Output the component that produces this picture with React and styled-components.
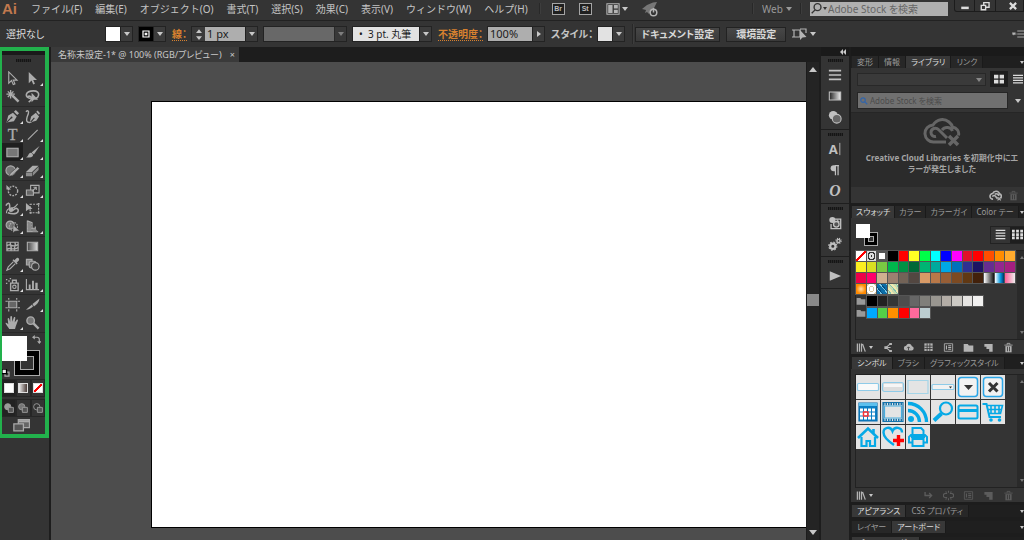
import { useState } from 'react';

import styled, { createGlobalStyle, css, ThemeProvider } from 'styled-components';

const theme = {
    panel: '#343434',
    dark: '#1d1d1d',
    text: '#c4c4c4',
    accent: '#d8812f',
    icon: '#b4b4b4',
};

const GlobalStyle = createGlobalStyle`
    * {
        box-sizing: border-box;
    }

    body {
        margin: 0;
        overflow: hidden;
        background: #343434;
        font-family: 'Noto Sans', 'Noto Sans CJK JP', sans-serif;
        font-size: 10px;
        font-feature-settings: 'palt';
    }

    button, input, select {
        font: inherit;
        font-feature-settings: inherit;
        color: inherit;
        margin: 0;
        padding: 0;
        border: 0;
        border-radius: 0;
        background: none;
    }
`;

/* ---------- icons ---------- */

const StyledSvg = styled.svg`
    display: block;
    flex: none;
    fill: none;
    stroke: currentColor;
    stroke-width: ${ ( { $weight } ) => $weight || 1.2 };
`;

function Icon( { size = 16, weight, children } ) {
    return (
        <StyledSvg width={ size } height={ size } viewBox="0 0 16 16" $weight={ weight } aria-hidden="true">
            { children }
        </StyledSvg>
    );
}

const solid = { fill: 'currentColor', stroke: 'none' };

const arrow = 'M4 1v12l3-2.800 1.800 4.300 1.800-.8-1.800-4h4z';

const tools = {
    選択: <path d={ arrow } />,
    ダイレクト選択: <path d={ arrow } { ...solid } />,
    自動選択: <>
        <path d="M8 7l6.500 6.500" strokeWidth="2.600" />
        <path d="M6 1v9M1.500 5.500h9M3 2.500l6 6M9 2.500l-6 6" strokeWidth="1.400" />
    </>,
    なげなわ: <>
        <path d="M6 10C2.500 9.500 1 8 1.500 5.500 2.500 2.500 6 2 9 2c4 0 6 2 5.500 4.500-.3 2-1.500 3-3 3.500M3 8c2-1 4 0 4 2s-2 3-3 4" strokeWidth="1.700" />
        <path d="M7 4v10l2.600-2.500H14z" { ...solid } />
    </>,
    ペン: <>
        <path d="M1.500 14.500L3.500 7l5-3 4 4-3 5z" { ...solid } />
        <path d="M9.500 3l2-2 3.500 3.500-2 2z" { ...solid } />
        <path d="M2 14l4.500-4.500" stroke="#343434" />
        <circle cx="7" cy="9" r="1" fill="#343434" stroke="none" />
    </>,
    曲線: <>
        <path d="M5 14.500L6.500 8l5-4L15 8l-3 4.500z" { ...solid } />
        <path d="M12 3l1.500-1.500L16 4.500 14.800 6z" { ...solid } />
        <path d="M1 3c2-2 3.500-1 2.500 2S1 11 2 13s5 1 5 1" strokeWidth="1.500" />
        <path d="M6 14l4-4.500" stroke="#343434" />
    </>,
    文字: <text x="8" y="14" textAnchor="middle" fontSize="17" fontFamily="Liberation Serif, serif" fill="currentColor" strokeWidth=".3">T</text>,
    直線: <path d="M3 13.500L13.500 3" />,
    長方形: <rect x="2" y="3.500" width="12" height="9" fill="#777" />,
    ブラシ: <>
        <path d="M15.500 1L9.500 10 7 8z" { ...solid } />
        <path d="M1 13c2 0 2-2.500 3.500-4S8 9 8.500 10.500 7 14.500 1 13z" { ...solid } />
    </>,
    Shaper: <>
        <circle cx="6" cy="8" r="5" fill="#777" />
        <path d="M4 14.500l1.500-3.500 8-7 2 2-7.500 7z" { ...solid } stroke="#343434" strokeWidth=".6" />
    </>,
    消しゴム: <>
        <path d="M1 9.500L8 3h6.500L7.500 9.500z" { ...solid } />
        <path d="M1 10.200h6.500V14H1zM8.200 10l6.300-6v3.500L8.200 13.800z" fill="#8c8c8c" stroke="none" />
    </>,
    回転: <>
        <circle cx="8.500" cy="8.500" r="5" strokeDasharray="2 1.200" strokeWidth="1.500" />
        <path d="M1.500 2v5h5z" { ...solid } />
    </>,
    拡大縮小: <>
        <path d="M6 2.500h9v8H6z" />
        <path d="M1.500 7.500H9V13H1.500z" fill="#666" />
        <path d="M7.500 9l4-4M9 4.500h3v3" />
    </>,
    線幅: <>
        <path d="M1 5c2-4 4-3 4 0s-1 6 1.500 6S10 7 12.500 8s2 4-.5 5-6 .5-9-.500" strokeWidth="1.700" />
        <path d="M1.500 13c0-3 2-5 5-5.500s3 1 7-4.500" />
        <circle cx="7" cy="9" r="2" { ...solid } />
    </>,
    自由変形: <>
        <path d="M5.500 3.500h9v9h-9z" strokeDasharray="2 1.200" />
        <path d="M13.500 2h2v2h-2zM13.500 11.500h2v2h-2zM5 11.500h2v2H5z" { ...solid } />
        <path d="M1 2v9l2.500-2 4.500-.800z" { ...solid } />
    </>,
    シェイプ形成: <>
        <circle cx="5.500" cy="6.500" r="4.300" fill="#777" />
        <circle cx="9" cy="8" r="4.300" strokeDasharray="1.600 1" />
        <path d="M8.500 6v9l2-2 5-.500z" { ...solid } stroke="#343434" strokeWidth=".5" />
    </>,
    遠近グリッド: <>
        <path d="M2.500 1.500v12H14M2.500 2l5 2v9.500M2.500 6l5 1M2.500 10H11M5 3v10.500M11 8v5.500" />
        <path d="M3 3l4 1.500V13H3zM8 10h3l3 3.500H8z" fill="#888" stroke="none" />
    </>,
    メッシュ: <>
        <path d="M2 3.500h12v9H2z" />
        <path d="M2 7c4-3 5 3 12-1M2 11c4-3 7 2 12-2M6 3.500c-2 4 3 5 0 9M10.500 3.500c2 3-2 6 0 9" strokeWidth="1.500" />
    </>,
    グラデーション: <>
        <defs>
            <linearGradient id="tool-gradient">
                <stop stopColor="#444" />
                <stop offset="1" stopColor="#ddd" />
            </linearGradient>
        </defs>
        <path d="M2.500 3.500h11v9h-11z" fill="url(#tool-gradient)" />
    </>,
    スポイト: <>
        <path d="M9 5L3.500 10.500 2 14l3.500-1.500L11 7" />
        <path d="M8 3.500L12.500 8l1-1-1-1L15 3.500c.5-2-1-3-2.500-2.500L10 3.500l-1-1z" { ...solid } />
    </>,
    ブレンド: <>
        <path d="M1.500 2.500h6v6h-6z" fill="#888" />
        <rect x="4.500" y="4.500" width="7" height="7" rx="2" fill="#666" />
        <circle cx="11" cy="10" r="4" fill="#3d3d3d" />
    </>,
    シンボルスプレー: <>
        <path d="M6 6.500h8v8H6zM8 6V3.500h4V6" strokeWidth="1.500" />
        <circle cx="10" cy="10.500" r="1.800" />
        <path d="M1 2h1.500v1.500H1zM3.500 3.500H5V5H3.500zM1 6h1.500v1.500H1zM5 1h1.500v1.500H5z" { ...solid } />
    </>,
    棒グラフ: <>
        <path d="M1.500 2v11.500H15" />
        <path d="M4 8h2v5H4zM7.500 4h2v9h-2zM11 6h2.500v7H11z" { ...solid } />
    </>,
    アートボード: <>
        <path d="M4 4.500h8.500v7H4z" fill="#666" />
        <path d="M4 1v2M12.500 1v2M4 13v2.500M12.500 13v2.500M.5 4.500H3M.5 11.500H3M13.500 4.500H16M13.500 11.500H16" />
    </>,
    スライス: <>
        <path d="M15.500 1.500L8 7.500l1.500 2.500c3-1.500 5.500-5 6-8.500z" { ...solid } />
        <path d="M7.500 8L1 13.500c3 0 5.500-1.500 7.500-3.500z" { ...solid } />
    </>,
    手のひら: <path d="M4.500 15C3 12 1 10.500.500 8.500c1-1 2 .5 3 1.300L2.800 4c.6-1.300 1.500-.8 1.800.2L5.500 7.500l.2-5.800c.6-1 1.600-.8 1.800.2l.3 5.400L9.500 2.400c.8-.8 1.600-.2 1.500.8L10.300 8l2.200-3c.9-.6 1.600.2 1.200 1.200L11.500 12l-.8 3z" { ...solid } />,
    ズーム: <>
        <circle cx="6" cy="6" r="4" fill="#777" strokeWidth="1.500" />
        <path d="M9 9l5.500 5.500" strokeWidth="2.500" />
    </>,
};

// name, has flyout
const toolGroups = [
    [ [ '選択' ], [ 'ダイレクト選択', true ], [ '自動選択' ], [ 'なげなわ' ] ],
    [
        [ 'ペン', true ], [ '曲線' ], [ '文字', true ], [ '直線', true ],
        [ '長方形', true ], [ 'ブラシ', true ], [ 'Shaper', true ], [ '消しゴム', true ],
    ],
    [
        [ '回転', true ], [ '拡大縮小', true ], [ '線幅', true ], [ '自由変形' ],
        [ 'シェイプ形成', true ], [ '遠近グリッド', true ],
    ],
    [ [ 'メッシュ' ], [ 'グラデーション' ], [ 'スポイト', true ], [ 'ブレンド' ] ],
    [ [ 'シンボルスプレー', true ], [ '棒グラフ', true ] ],
    [ [ 'アートボード' ], [ 'スライス', true ], [ '手のひら', true ], [ 'ズーム' ] ],
];

const cloud = 'M5 12.500a3.500 3.500 0 0 1-.5-7A4.500 4.500 0 0 1 13 6a3.300 3.300 0 0 1-.5 6.500z';

const glyphs = {
    library: <path d="M2 2v12M5 2v12M8 2v12M9.500 3l4 11" strokeWidth="1.800" />,
    share: <>
        <path d="M10 3L4.500 8l5.500 5M4.500 8H11" strokeWidth="1.600" />
        <path d="M9 1.500h4v3H9zM2 6h4v4H2zM9 11.500h4v3H9z" { ...solid } />
    </>,
    cloud: <>
        <path d={ cloud } { ...solid } />
        <path d="M8 12V7.500M6 9l2-2 2 2" stroke="#343434" />
    </>,
    kinds: <>
        <path d="M2 2h12v11H2z" { ...solid } />
        <path d="M6 2v11M10 2v11M2 6h12M2 9.500h12" stroke="#343434" />
    </>,
    options: <>
        <path d="M2 2.500h12v11H2z" />
        <path d="M5 5v6M7.500 5.500H12M7.500 8H12M7.500 10.500H12" strokeWidth="1.600" />
    </>,
    folder: <path d="M1 3h6l1.500 2H15v9H1z" { ...solid } />,
    page: <path d="M2 3h12v11H9v-4H5V7H2z" { ...solid } />,
    trash: <>
        <path d="M3.500 6h9v9h-9z" { ...solid } />
        <path d="M2 4.500h12M6 4V2h4v2" />
        <path d="M6.500 7v6.500M9.500 7v6.500" stroke="#343434" />
    </>,
    place: <path d="M3 3v5h9M9 4.500L12.500 8 9 11.500" strokeWidth="2" />,
    unlink: <path d="M6 5H3.500a3 3 0 0 0 0 6H6M10 5h2.500a3 3 0 0 1 0 6H10M8 1v3M8 12v3M4 2l1 2M12 2l-1 2M4 14l1-2M12 14l-1-2" strokeWidth="1.600" />,
    creative: <>
        <path d="M5 12.500a3.500 3.500 0 0 1-.5-7A4.500 4.500 0 0 1 13 6c3 1 2.500 4 1 5.500M4.500 9.500c0-2 3-2 4 0l2 2.500M7 6.500c2-1.500 5 0 5 2" strokeWidth="2" />
        <path d="M10.500 10l4 4M14.500 10l-4 4" strokeWidth="1.500" />
    </>,
};

const Triangle = styled.span`
    display: inline-block;
    flex: none;
    width: 0;
    height: 0;
    color: ${ ( { $color } ) => $color || '#c8c8c8' };
    border: 3px solid transparent;

    ${ ( { $to } ) => ( {
        up: css`border-width: 0 4px 5px; border-bottom-color: currentColor;`,
        down: css`border-width: 4px 3px 0; border-top-color: currentColor;`,
        wide: css`border-width: 5px 4px 0; border-top-color: currentColor;`,
        right: css`border-width: 3px 0 3px 4px; border-left-color: currentColor;`,
        left: css`border-width: 3px 3px 3px 0; border-right-color: currentColor;`,
        smallUp: css`border-width: 0 2px 3px; border-bottom-color: currentColor;`,
        smallDown: css`border-width: 3px 2px 0; border-top-color: currentColor;`,
    } )[ $to || 'down' ] }
`;

/* ---------- frame ---------- */

const Window = styled.div`
    display: flex;
    flex-direction: column;
    height: 100vh;
    overflow: hidden;
    line-height: 14px;
    white-space: nowrap;
    color: ${ ( { theme } ) => theme.text };
    background: ${ ( { theme } ) => theme.panel };
`;

const MenuBar = styled.header`
    display: flex;
    align-items: center;
    height: 21px;
    flex: none;
    padding-bottom: 3px;
    border-bottom: 1px solid #222;
`;

const Brand = styled.span`
    width: 31px;
    padding-left: 2px;
    color: #c1794e;
    font: bold 15px/17px 'Liberation Sans', sans-serif;
`;

const MenuList = styled.nav`
    display: flex;
    gap: 13px;
    font-feature-settings: normal;
`;

const Rule = styled.span`
    align-self: stretch;
    width: 2px;
    margin: 3px ${ ( { $gap } ) => $gap }px;
    background: #282828;
    border-right: 1px solid #3d3d3d;
`;

const ActionRow = styled.div`
    display: flex;
    align-items: center;
    gap: 14px;
`;

const AppBadge = styled.button`
    width: 13px;
    height: 12px;
    border: 1px solid #a5a5a5;
    background: #1f1f1f;
    color: #bbb;
    font: bold 7px/8px 'Liberation Sans', sans-serif;
`;

const IconButton = styled.button`
    display: flex;
    align-items: center;
    gap: 2px;
    color: ${ ( { $dim, theme } ) => $dim ? '#5c5c5c' : theme.icon };
`;

const MenuTools = styled.div`
    display: flex;
    align-items: center;
    align-self: stretch;
    margin-left: auto;
`;

const Workspace = styled.select`
    appearance: none;
    width: 24px;
    color: #999;
`;

const StockSearch = styled.label`
    display: flex;
    align-items: center;
    gap: 1px;
    width: 138px;
    height: 14px;
    padding-left: 1px;
    background: #b0b0b0;
    color: #333;

    input {
        flex: 1;
        min-width: 0;
        outline: 0;
    }

    input::placeholder {
        color: #666;
    }
`;

const WindowButtons = styled.div`
    display: flex;
    align-self: flex-start;
    height: 12px;
    margin-left: 6px;

    button {
        display: grid;
        place-items: center;
        width: 21px;
        color: #ddd;
        border: 1px solid #1c1c1c;
        border-top: 0;
        border-left: 0;
    }

    button:first-child {
        border-left: 1px solid #1c1c1c;
        border-bottom-left-radius: 3px;
    }

    button:last-child {
        width: 28px;
        padding-left: 6px;
    }
`;

const ControlBar = styled.div`
    display: flex;
    align-items: center;
    height: 26px;
    flex: none;
    padding-left: 6px;
`;

const SelectionState = styled.span`
    width: 100px;
    color: #ddd;
`;

const Field = styled.div`
    display: flex;
    height: 14px;
    margin-right: 7px;
    outline: 1px solid #232323;
`;

const CaretButton = styled.button`
    display: grid;
    place-items: center;
    width: 12px;
    background: #3c3c3c;
    border-left: 1px solid #222;
    opacity: ${ ( { disabled } ) => disabled ? .5 : 1 };
`;

const PaintButton = styled.button`
    display: grid;
    place-items: center;
    width: 14px;
    background: ${ ( { $fill } ) => $fill };
    color: #fff;
`;

const FieldLabel = styled.label`
    margin-right: 5px;
    font-weight: bold;
    line-height: 12px;
    color: ${ ( { $link, theme } ) => $link ? theme.accent : '#c4c4c4' };
    ${ ( { $link } ) => $link && css`border-bottom: 1px dotted #d8812f;` }
`;

const Stepper = styled.div`
    display: flex;
    flex-direction: column;
    width: 13px;
    background: #3a3a3a;

    button {
        display: grid;
        place-items: center;
        height: 7px;
    }
`;

const ValueInput = styled.input`
    width: ${ ( { $wide } ) => $wide ? 44 : 40 }px;
    padding-left: 2px;
    background: #aeaeae;
    color: #1c1c1c;
    font-size: 11px;
`;

const ValueSelect = styled.select`
    appearance: none;
    width: ${ ( { $wide } ) => $wide ? 70 : 66 }px;
    padding-left: 6px;
    background: ${ ( { disabled } ) => disabled ? '#686868' : '#e2e2e2' };
    color: #1c1c1c;
    opacity: 1;
    font-size: 10px;
`;

const BarButton = styled.button`
    height: 15px;
    min-width: 60px;
    margin-right: 6px;
    padding: 0 5px;
    border: 1px solid #222;
    background: linear-gradient( #474747, #3a3a3a );
    color: #d8d8d8;
    font-weight: bold;
    line-height: 13px;
`;

const Body = styled.div`
    display: flex;
    flex: 1;
    min-height: 0;
    background: ${ ( { theme } ) => theme.dark };
`;

/* ---------- tool box ---------- */

const ToolColumn = styled.aside`
    width: 49px;
    flex: none;
    margin-right: 2px;
    background: ${ ( { theme } ) => theme.panel };
`;

const ToolBox = styled.div`
    border: 4px solid #22b14c;
    border-left-width: 2px;
`;

const Grip = styled.div`
    height: ${ ( { $tall } ) => $tall ? 14 : 8 }px;
    padding-bottom: ${ ( { $tall } ) => $tall ? 4 : 0 }px;
    display: grid;
    place-items: center;

    &::before {
        content: '';
        width: 15px;
        height: 3px;
        background: repeating-linear-gradient( 90deg, #151515 0 1px, #262626 1px 2px );
    }
`;

const DarkStrip = styled.div`
    height: 4px;
    background: #1a1a1a;
`;

const ToolGroup = styled.div`
    display: grid;
    grid-template-columns: 1fr 1fr;
    border-bottom: 1px solid #292929;
    padding: 0 2px 1px 0;
`;

const ToolButton = styled.button`
    position: relative;
    display: grid;
    place-items: center;
    height: 18px;
    color: #acacac;
    background: ${ ( { $active } ) => $active ? '#1f1f1f' : 'none' };

    ${ ( { $flyout } ) => $flyout && css`
        &::after {
            content: '';
            position: absolute;
            right: 0;
            bottom: 1px;
            border-left: 3px solid transparent;
            border-bottom: 3px solid #ddd;
        }
    ` }
`;

const PaintStack = styled.div`
    position: relative;
    height: ${ ( { $small } ) => $small ? 22 : 46 }px;
    width: ${ ( { $small } ) => $small ? 24 : 43 }px;
    color: #aaa;
`;

const FillChip = styled.button`
    position: absolute;
    top: ${ ( { $small } ) => $small ? 0 : 3 }px;
    left: 0;
    width: ${ ( { $small } ) => $small ? 14 : 25 }px;
    aspect-ratio: 1 / 1;
    background: #fff;
`;

const StrokeChip = styled.button`
    position: absolute;
    right: ${ ( { $small } ) => $small ? 2 : 5 }px;
    bottom: ${ ( { $small } ) => $small ? 0 : 3 }px;
    width: ${ ( { $small } ) => $small ? 14 : 26 }px;
    aspect-ratio: 1 / 1;
    background: #000;
    border: 1px solid #aaa;

    &::after {
        content: '';
        position: absolute;
        inset: ${ ( { $small } ) => $small ? 3 : 5 }px;
        background: #343434;
        border: 1px solid #aaa;
    }
`;

const SwapButton = styled.button`
    position: absolute;
    top: 2px;
    right: 4px;
`;

const ResetButton = styled.button`
    position: absolute;
    bottom: 2px;
    left: 0;
`;

const ModeRow = styled.div`
    display: grid;
    grid-template-columns: repeat( 3, 1fr );
    height: 18px;
    margin-bottom: ${ ( { $gap } ) => $gap || 0 }px;

    button {
        display: grid;
        place-items: center;
        border: 1px solid #262626;
        color: #999;
    }

    button:first-child {
        background: #222;
    }
`;

const ModeChip = styled.span`
    width: 10px;
    height: 10px;
    border: 1px solid #ddd;
    background: ${ ( { $fill } ) => $fill };
`;

const ScreenMode = styled.button`
    display: flex;
    justify-content: center;
    align-items: center;
    width: 38px;
    height: 17px;
    color: #aaa;
`;

/* ---------- document ---------- */

const DocumentArea = styled.main`
    display: flex;
    flex-direction: column;
    flex: 1;
    min-width: 0;
`;

const DocumentTabs = styled.div`
    display: flex;
    height: 15px;
    flex: none;
`;

const DocumentTab = styled.div`
    display: flex;
    align-items: center;
    gap: 8px;
    padding: 0 4px 0 7px;
    background: #3a3a3a;
    color: #c8c8c8;
    font-size: 9px;
`;

const Stage = styled.div`
    display: flex;
    flex: 1;
    min-height: 0;
    background: #4d4d4d;
`;

const Board = styled.div`
    flex: 1;
    margin: 39px 0 12px 100px;
    background: #fff;
    border: 1px solid #000;
    border-right: 0;
`;

const ScrollBar = styled.div`
    display: flex;
    flex-direction: column;
    align-items: center;
    width: 13px;
    padding: 5px 0;
    background: #242424;
    border-left: 1px solid #1c1c1c;

    i {
        width: 12px;
        height: 12px;
        margin: 222px 0 auto;
        background: #888;
    }
`;

/* ---------- docks ---------- */

const Dock = styled.aside`
    display: flex;
    flex-direction: column;
    width: ${ ( { $wide } ) => $wide ? 173 : 28 }px;
    flex: none;
    margin-left: 2px;
    background: ${ ( { $wide, theme } ) => $wide ? theme.dark : theme.panel };
`;

const DockHeader = styled.div`
    display: flex;
    justify-content: flex-end;
    align-items: center;
    height: 9px;
    flex: none;
    padding-right: 3px;
    background: #1a1a1a;
`;

const DockGroup = styled.div`
    padding-bottom: 2px;
    border-bottom: 1px solid #1e1e1e;
`;

const DockButton = styled.button`
    display: grid;
    place-items: center;
    width: 100%;
    height: 21px;
    color: #c0c0c0;
`;

const Panel = styled.section`
    display: flex;
    flex-direction: column;
    margin-bottom: ${ ( { $gap } ) => $gap || 3 }px;
    flex: none;
    background: ${ ( { theme } ) => theme.panel };
`;

const TabStrip = styled.div`
    display: flex;
    align-items: stretch;
    height: 12px;
    background: #1f1f1f;
    padding-left: 1px;
`;

const Tab = styled.button`
    padding: 0 ${ ( { $tight } ) => $tight ? 4 : 5 }px;
    border-right: 1px solid #1a1a1a;
    line-height: 12px;
    font-size: 8px;
    background: ${ ( { $active } ) => $active ? '#383838' : '#272727' };
    color: ${ ( { $active } ) => $active ? '#dcdcdc' : '#9a9a9a' };
`;

const StripMenu = styled.span`
    display: flex;
    align-items: center;
    margin-left: auto;
`;

const LibraryTop = styled.div`
    display: grid;
    grid-template-columns: 1fr 18px 12px;
    gap: 5px 4px;
    align-items: center;
    height: 45px;
    padding: 3px 0 4px 6px;
    border-bottom: 1px solid #262626;
`;

const SelectWrap = styled.div`
    position: relative;

    select {
        appearance: none;
        display: block;
        width: 100%;
        height: 13px;
        border: 1px solid #282828;
        background: #3a3a3a;
    }

    span {
        position: absolute;
        top: 5px;
        right: 4px;
        pointer-events: none;
    }
`;

const ViewButton = styled.button`
    display: grid;
    place-items: center;
    height: 16px;
    color: #ddd;
    background: ${ ( { $active } ) => $active ? '#1e1e1e' : 'none' };
`;

const LibrarySearch = styled.label`
    grid-column: 1 / 3;
    display: flex;
    align-items: center;
    gap: 2px;
    height: 17px;
    padding-left: 2px;
    border: 1px solid #262626;
    background: #707070;
    color: #3465a8;

    input {
        flex: 1;
        min-width: 0;
        font-size: 8px;
    }

    input::placeholder {
        color: #4c4c4c;
    }
`;

const LibraryMessage = styled.div`
    display: flex;
    flex-direction: column;
    align-items: center;
    height: 74px;
    padding: 5px 0 0 9px;
    background: #2b2b2b;
    color: #a4a4a4;
    text-align: center;
    font-size: 8px;
    font-weight: bold;
    line-height: 11px;

    svg {
        color: #666;
        margin-bottom: 4px;
    }

    p {
        margin: 0;
    }
`;

const PanelFooter = styled.div`
    display: flex;
    align-items: center;
    justify-content: space-between;
    height: ${ ( { $tall } ) => $tall ? 16 : 14 }px;
    padding: 0 ${ ( { $tall } ) => $tall ? 5 : 10 }px 0 5px;
`;

const FooterGroup = styled.div`
    display: flex;
    gap: ${ ( { $close } ) => $close ? 6 : 9 }px;
    margin-left: auto;
`;

const PaintRow = styled.div`
    display: flex;
    align-items: center;
    justify-content: space-between;
    height: 32px;
    padding: 1px 0 0 5px;
`;

const ViewToggle = styled.div`
    display: grid;
    grid-template-columns: 19px 14px;
    border: 1px solid #222;
    border-right: 0;
`;

const Scrolled = styled.div`
    display: flex;
    height: ${ ( { $tall } ) => $tall ? 114 : 90 }px;
    margin-left: 4px;
    border: 1px solid #222;
    border-right: 0;
`;

const ScrolledContent = styled.div`
    flex: 1;
`;

const Rail = styled.div`
    display: flex;
    flex-direction: column;
    justify-content: space-between;
    align-items: flex-end;
    width: 7px;
    padding: 5px 0;
    margin-left: 2px;
    background: #2a2a2a;
`;

const SwatchGrid = styled.div`
    display: grid;
    grid-template-columns: repeat( 15, 1fr );
    grid-auto-rows: 10px;
    gap: 1px;
    margin-bottom: 2px;
`;

const Swatch = styled.button`
    background: ${ ( { $fill } ) => $fill };
    outline: 1px solid #555;
`;

const FolderCell = styled.span`
    display: grid;
    place-items: center;
    color: #999;
`;

const SymbolBody = styled.div`
    padding-top: 5px;
`;

const SymbolGrid = styled.div`
    display: grid;
    grid-template-columns: repeat( auto-fill, 24px );
    grid-auto-rows: 24px;
    gap: 1px;
`;

const SymbolCell = styled.button`
    display: grid;
    place-items: center;
    background: #e4e4e4;
    color: #06a9e6;
`;

/* ---------- data ---------- */

const menus = [
    'ファイル(F)', '編集(E)', 'オブジェクト(O)', '書式(T)', '選択(S)', '効果(C)', '表示(V)', 'ウィンドウ(W)', 'ヘルプ(H)',
];

const none = 'linear-gradient( 135deg, #fff 42%, #f00 43% 57%, #fff 58% )';

const swatches = [
    none,
    'repeating-radial-gradient( #333 0 1px, #ddd 1px 3px )',
    'linear-gradient( #fff, #fff ) center / 6px 6px no-repeat, #555',
    '#000', '#f00', '#ffff24', '#00ff48', '#0ff', '#00f', '#f0f', '#e0102a', '#f00', '#ff4e00', '#ff8c00', '#ffab2e',
    '#fcee21', '#d9e021', '#7ac943', '#00b84c', '#009245', '#006837', '#00b573', '#00a99d', '#00a8e6', '#0071bc', '#2e3192', '#1b1464', '#662d91', '#93278f', '#a51f80',
    '#ed0048', '#ff006a', '#d0b090', '#9c8070', '#736357', '#534741', '#d89a66', '#b87848', '#965e36', '#7c4a22', '#603813', '#42210b',
    'linear-gradient( 90deg, #fff, #111 )',
    'linear-gradient( 90deg, #fff, #0a9be0 60%, #036 )',
    'linear-gradient( 90deg, #ff5c96, #eee )',
    'radial-gradient( #ffe0b0, #ff8a00 65% )',
    'repeating-radial-gradient( #fff 0 2px, #dcc9a0 2px 3px )',
    'repeating-linear-gradient( 50deg, #0b6ea8 0 3px, #7cc8e8 3px 4px, #064e80 4px 5px )',
    'repeating-linear-gradient( 50deg, #c8dcb0 0 2px, #7fbfb0 2px 3px, #f0e8b0 3px 5px )',
];

const grays = [ '#000', '#222', '#333636', '#4d4d4d', '#666', '#807f7a', '#999690', '#b3ada6', '#ccc9c4', '#e6e4e2', '#f2f1f0' ];
const brights = [ '#00a8ff', '#55cf48', '#ff9000', '#f00', '#ff6a9c', '#bccdd0' ];

const dockGroups = [
    [
        [ '線', <path d="M1 3h14M1 8h14M1 13h14" strokeWidth="1.800" /> ],
        [ 'グラデーション', <>
            <defs>
                <linearGradient id="dock-gradient">
                    <stop stopColor="#222" />
                    <stop offset="1" stopColor="#eee" />
                </linearGradient>
            </defs>
            <path d="M1.500 3.500h13v9h-13z" fill="url(#dock-gradient)" />
        </> ],
        [ '透明', <>
            <circle cx="6" cy="6" r="5" { ...solid } />
            <circle cx="10" cy="10" r="5" fill="#666" />
        </> ],
    ],
    [
        [ '文字', <>
            <text x="6" y="13.500" textAnchor="middle" fontSize="15" fontWeight="bold" fontFamily="Open Sans, sans-serif" fill="currentColor" stroke="none">A</text>
            <path d="M13.500 1v14" strokeWidth="1" />
        </> ],
        [ '段落', <>
            <path d="M8 2.500H6.500a3.500 3.500 0 0 0 0 7H8z" { ...solid } />
            <path d="M8 3h4.500M8.500 2.500V14M11.500 2.500V14" strokeWidth="1.400" />
        </> ],
        [ 'OpenType', <text x="8" y="14" textAnchor="middle" fontSize="18" fontStyle="italic" fontWeight="bold" fontFamily="Liberation Serif, serif" fill="currentColor" stroke="none">O</text> ],
    ],
    [
        [ 'CSS', <>
            <path d="M7 3.500h7.500v11h-11V9" strokeWidth="1.500" />
            <circle cx="5" cy="4.500" r="3.500" { ...solid } />
            <circle cx="9.500" cy="9.500" r="3.200" fill="#555" strokeWidth="1.500" />
            <path d="M10 4l3 3" />
        </> ],
        [ 'アクション設定', <>
            <circle cx="5.500" cy="10.500" r="3" strokeWidth="2.500" />
            <circle cx="5.500" cy="10.500" r="4.700" strokeDasharray="1.800 1.900" />
            <circle cx="12" cy="4.500" r="1.800" strokeWidth="1.600" />
            <circle cx="12" cy="4.500" r="3" strokeDasharray="1.200 1.200" />
        </> ],
    ],
    [
        [ 'アクション', <path d="M2 2.500L15 8 2 13.500z" { ...solid } /> ],
    ],
];

const symbols = [
    [ 'フィールド', <rect x="1.500" y="8.500" width="21" height="7" rx="1" fill="#fafafa" stroke="#8fcbe8" /> ],
    [ 'ボタン', <>
        <rect x="1.500" y="7.500" width="21" height="9" rx="2" fill="#ddd" stroke="#8fcbe8" />
        <path d="M3 9h18v3H3z" fill="#f6f6f6" stroke="none" />
    </> ],
    [ 'テキスト', <path d="M2 5.500h20v13H2z" stroke="#a5d5e8" /> ],
    [ 'コンボ', <>
        <rect x="1" y="9.500" width="22" height="5" rx="1" fill="#f2f2f2" stroke="#8fcbe8" />
        <path d="M18 11.500h3l-1.500 2z" fill="#333" stroke="none" />
    </> ],
    [ '下向き', <>
        <rect x="2.500" y="2.500" width="19" height="19" rx="3" fill="#f2f2f2" stroke="#2ba6e8" strokeWidth="1.500" />
        <path d="M8 10h9l-4.500 5z" fill="#333" stroke="none" />
    </> ],
    [ '閉じる', <>
        <rect x="2.500" y="2.500" width="19" height="19" rx="3" fill="#f2f2f2" stroke="#2ba6e8" strokeWidth="1.500" />
        <path d="M8 8l8.500 8.500M16.500 8L8 16.500" stroke="#333" strokeWidth="3" />
    </> ],
    [ 'カレンダー', <>
        <path d="M3 3h18v18H3z" fill="#0a7fc4" stroke="#0a6fb0" />
        <path d="M3 3h18v3H3z" fill="#5cc0ee" stroke="none" />
        <path d="M4 10h16M4 14h16M4 18h16" stroke="#fff" strokeWidth="3" strokeDasharray="3 1" />
        <path d="M7.500 12h4.500v4H7.500z" stroke="#f33" strokeWidth="1.500" />
    </> ],
    [ 'フィルム', <>
        <path d="M2 2.500h20v19H2z" stroke="#1774ac" />
        <path d="M2 4h20M2 20h20" stroke="#1774ac" strokeWidth="2.500" strokeDasharray="1.500 1" />
        <path d="M3.500 6h17v12h-17z" stroke="#4aaede" fill="#e4e4e4" />
    </> ],
    [ 'RSS', <>
        <circle cx="5" cy="19" r="3" fill="currentColor" stroke="none" />
        <path d="M2 10.500A11.500 11.500 0 0 1 13.500 22M2 3.500A18.500 18.500 0 0 1 20.500 22" strokeWidth="3.400" />
    </> ],
    [ '検索', <>
        <circle cx="15" cy="8.500" r="6" strokeWidth="2.200" />
        <path d="M10.500 13.500L3 20.500" strokeWidth="4" />
    </> ],
    [ 'カード', <>
        <rect x="2.500" y="5.500" width="19" height="13" rx="1.500" strokeWidth="2" />
        <path d="M2.500 10.500h19" strokeWidth="3" />
    </> ],
    [ 'カート', <>
        <path d="M1.500 4h4L8.500 17H20" strokeWidth="2" />
        <path d="M5.500 5.500H21.500L19.500 13.500H8M6.500 9.500h14M10 6v7M14 6v7M18 6v7" strokeWidth="1.600" />
        <circle cx="10" cy="20" r="1.800" fill="currentColor" stroke="none" />
        <circle cx="18.500" cy="20" r="1.800" fill="currentColor" stroke="none" />
    </> ],
    [ 'ホーム', <>
        <path d="M2 13L12 3.500 22 13M17.500 4v5" strokeWidth="2.600" />
        <path d="M5.500 12v9h5v-5h3.500v5h5v-9" strokeWidth="2.200" />
    </> ],
    [ 'お気に入り', <>
        <path d="M13 20C7 16 2.500 12 2.500 7.500c0-5.500 7-6.500 9 -1.500 2-5 9.500-4 9.500 1.500" strokeWidth="2.400" />
        <path d="M17.500 10v11M12 15.500h11" stroke="#f00" strokeWidth="3.400" />
    </> ],
    [ 'プリント', <>
        <path d="M6.500 9V3h8.500l2.500 2.500V9" strokeWidth="2" />
        <path d="M6 17.500H3v-5.500l2-2h14l2 2v5.500h-3M6.500 14h11v7h-11zM5 12h14" strokeWidth="2" />
    </> ],
];

/* ---------- components ---------- */

function Caret( { label, to, disabled } ) {
    return (
        <CaretButton aria-label={ label } disabled={ disabled }>
            <Triangle $to={ to } />
        </CaretButton>
    );
}

function AppActions() {
    return (
        <ActionRow>
            <AppBadge>Br</AppBadge>
            <AppBadge>St</AppBadge>
            <IconButton aria-label="ドキュメントレイアウト">
                <Icon size={ 14 }>
                    <path d="M1 2h14v12H1z" />
                    <path d="M2.500 3.500h5v9h-5zM9 3.500h4.500v4H9zM9 8.800h4.500v3.700H9z" { ...solid } />
                </Icon>
                <Triangle />
            </IconButton>
            <IconButton aria-label="GPU パフォーマンス">
                <Icon>
                    <path d="M0 8l5-4 6-2.500L15 1l-3 6-5 6-2-2-2 1 1-3z" fill="#777" stroke="none" />
                    <circle cx="11.500" cy="11.500" r="3.300" fill="#343434" strokeWidth="1.500" />
                    <path d="M11.500 7v4.500" strokeWidth="1.500" />
                </Icon>
            </IconButton>
        </ActionRow>
    );
}

function TopMenu() {
    return (
        <MenuBar>
            <Brand>Ai</Brand>
            <MenuList>
                { menus.map( ( menu ) => <button key={ menu }>{ menu }</button> ) }
            </MenuList>
            <Rule $gap={ 11 } />
            <AppActions />
            <MenuTools>
                <Rule $gap={ 8 } />
                <Workspace aria-label="ワークスペース"><option>Web</option></Workspace>
                <Triangle $color="#999" />
                <Rule $gap={ 8 } />
                <StockSearch>
                    <Icon size={ 11 } weight={ 2 }>
                        <circle cx="9.500" cy="6" r="5" />
                        <path d="M6 10l-5 5" />
                    </Icon>
                    <Triangle $to="smallDown" $color="#333" />
                    <input aria-label="Adobe Stock" placeholder="Adobe Stock を検索" />
                </StockSearch>
                <WindowButtons>
                    <button aria-label="最小化"><Icon size={ 10 } weight={ 4 }><path d="M2 11h12" /></Icon></button>
                    <button aria-label="元に戻す">
                        <Icon size={ 10 } weight={ 2.2 }><path d="M2 7h7v7H2zM6 7V2.500h8.500v7.500H9" /></Icon>
                    </button>
                    <button aria-label="終了"><Icon size={ 10 } weight={ 3.5 }><path d="M3 3l10 10M13 3L3 13" /></Icon></button>
                </WindowButtons>
            </MenuTools>
        </MenuBar>
    );
}

function OptionsBar() {
    return (
        <ControlBar>
            <SelectionState>選択なし</SelectionState>
            <Field>
                <PaintButton $fill="#fff" aria-label="塗り" />
                <Caret label="塗りの一覧" />
            </Field>
            <Field>
                <PaintButton $fill="#000" aria-label="線のカラー">
                    <Icon size={ 12 } weight={ 1.6 }><path d="M4 4h8v8H4zM7 7h2v2H7z" /></Icon>
                </PaintButton>
                <Caret label="線の一覧" />
            </Field>
            <FieldLabel $link htmlFor="stroke-width">線：</FieldLabel>
            <Field>
                <Stepper>
                    <button aria-label="増やす"><Icon size={ 6 }><path d="M0 13L8 3l8 10z" { ...solid } /></Icon></button>
                    <button aria-label="減らす"><Icon size={ 6 }><path d="M0 3l8 10 8-10z" { ...solid } /></Icon></button>
                </Stepper>
                <ValueInput id="stroke-width" defaultValue="1 px" />
                <Caret label="線幅の一覧" />
            </Field>
            <Field>
                <ValueSelect $wide disabled aria-label="可変線幅プロファイル"><option> </option></ValueSelect>
                <Caret label="プロファイルの一覧" disabled />
            </Field>
            <Field>
                <ValueSelect aria-label="ブラシ定義"><option>•&nbsp; 3 pt. 丸筆</option></ValueSelect>
                <Caret label="ブラシの一覧" />
            </Field>
            <FieldLabel $link htmlFor="opacity">不透明度：</FieldLabel>
            <Field>
                <ValueInput $wide id="opacity" defaultValue="100%" />
                <Caret label="不透明度の一覧" to="right" />
            </Field>
            <FieldLabel as="span">スタイル：</FieldLabel>
            <Field>
                <PaintButton $fill="#e2e2e2" aria-label="スタイル" />
                <Caret label="スタイルの一覧" />
            </Field>
            <Rule $gap={ 1 } />
            <BarButton>ドキュメント設定</BarButton>
            <BarButton>環境設定</BarButton>
            <IconButton aria-label="共通オブジェクトを選択">
                <Icon><path d="M2 4h6v7H2zM0 4h2M0 11h2M8 3h6v4" /><path d="M8 4v10l2.500-2.500 4-.500z" { ...solid } /></Icon>
                <Triangle />
            </IconButton>
            <MenuTools>
                <IconButton aria-label="パネルメニュー">
                    <Icon size={ 12 }><path d="M7 4h9M7 8h9M7 12h9M0 8h6" /><path d="M0 6h5l-2.500 4z" { ...solid } /></Icon>
                </IconButton>
            </MenuTools>
        </ControlBar>
    );
}

function DrawMode( { front } ) {
    return (
        <Icon size={ 10 } weight={ 1.5 }>
            <circle cx="6" cy="6" r="5" fill={ front } />
            <path d="M7 7h8v8H7z" fill="#555" />
        </Icon>
    );
}

function Toolbar() {
    const [ active, setActive ] = useState( '長方形' );

    return (
        <ToolColumn>
            <ToolBox>
                <DarkStrip />
                <Grip $tall />
                { toolGroups.map( ( group, index ) => (
                    <ToolGroup key={ index }>
                        { group.map( ( [ name, flyout ] ) => (
                            <ToolButton
                                key={ name }
                                aria-label={ name }
                                $flyout={ flyout }
                                $active={ name === active }
                                onClick={ () => setActive( name ) }
                            >
                                <Icon size={ 15 }>{ tools[ name ] }</Icon>
                            </ToolButton>
                        ) ) }
                    </ToolGroup>
                ) ) }
                <PaintStack>
                    <StrokeChip aria-label="線" />
                    <FillChip aria-label="塗り" />
                    <SwapButton aria-label="塗りと線を入れ替え">
                        <Icon size={ 9 } weight={ 2 }><path d="M3 4h6c3 0 4 2 4 4v5" /><path d="M5 0v8L0 4zM9 11h8l-4 5z" { ...solid } /></Icon>
                    </SwapButton>
                    <ResetButton aria-label="初期設定">
                        <Icon size={ 8 } weight={ 2.5 }><path d="M6 6h8v8H6z" /><path d="M0 0h9v9H0z" fill="#eee" stroke="#000" /></Icon>
                    </ResetButton>
                </PaintStack>
                <ModeRow $gap={ 2 }>
                    <button aria-label="カラー"><ModeChip $fill="#fff" /></button>
                    <button aria-label="グラデーション"><ModeChip $fill="linear-gradient( 90deg, #eee, #4a3c38 )" /></button>
                    <button aria-label="なし"><ModeChip $fill={ none } /></button>
                </ModeRow>
                <ModeRow>
                    <button aria-label="標準描画"><DrawMode front="#999" /></button>
                    <button aria-label="背面描画"><DrawMode front="#777" /></button>
                    <button aria-label="内側描画" disabled><DrawMode front="#333" /></button>
                </ModeRow>
                <ScreenMode aria-label="スクリーンモード">
                    <Icon size={ 17 }><path d="M5 2.500h10.500v7.500H5z" fill="#666" /><path d="M.8 6.500h9V13h-9z" fill="#555" /><path d="M5 4h10.500" strokeWidth="2" /></Icon>
                </ScreenMode>
            </ToolBox>
        </ToolColumn>
    );
}

function Document() {
    return (
        <DocumentArea>
            <DocumentTabs>
                <DocumentTab>
                    名称未設定-1* @ 100% (RGB/プレビュー)
                    <button aria-label="閉じる">×</button>
                </DocumentTab>
            </DocumentTabs>
            <Stage>
                <Board />
                <ScrollBar>
                    <Triangle $to="up" />
                    <i />
                    <Triangle $to="wide" />
                </ScrollBar>
            </Stage>
        </DocumentArea>
    );
}

function IconDock() {
    return (
        <Dock>
            <DockHeader><Triangle $to="left" /><Triangle $to="left" /></DockHeader>
            { dockGroups.map( ( group, index ) => (
                <DockGroup key={ index }>
                    <Grip />
                    { group.map( ( [ name, drawing ] ) => (
                        <DockButton key={ name } aria-label={ name }><Icon size={ 14 }>{ drawing }</Icon></DockButton>
                    ) ) }
                </DockGroup>
            ) ) }
        </Dock>
    );
}

function Tabs( { names, active = 0, tight } ) {
    return (
        <TabStrip>
            { names.map( ( name, index ) => <Tab key={ name } $active={ index === active } $tight={ tight }>{ name }</Tab> ) }
            <StripMenu><Triangle $to="smallDown" /></StripMenu>
        </TabStrip>
    );
}

function ScrollRail() {
    return (
        <Rail>
            <Triangle $to="smallUp" $color="#777" />
            <Triangle $to="smallDown" $color="#777" />
        </Rail>
    );
}

function Footer( { names, dim } ) {
    const [ first, ...rest ] = names;

    return (
        <PanelFooter>
            <IconButton aria-label={ first }>
                <Icon size={ 11 }>{ glyphs[ first ] }</Icon>
                <Triangle $to="smallDown" />
            </IconButton>
            <FooterGroup>
                { rest.map( ( name ) => (
                    <IconButton key={ name } $dim={ dim } aria-label={ name }><Icon size={ 11 }>{ glyphs[ name ] }</Icon></IconButton>
                ) ) }
            </FooterGroup>
        </PanelFooter>
    );
}

function LibraryPanel() {
    return (
        <Panel>
            <Tabs names={ [ '変形', '情報', 'ライブラリ', 'リンク' ] } active={ 2 } />
            <LibraryTop>
                <SelectWrap>
                    <select aria-label="ライブラリ"><option> </option></select>
                    <Triangle $color="#888" />
                </SelectWrap>
                <ViewButton $active aria-label="アイコン表示">
                    <Icon size={ 10 }><path d="M0 1h7v6H0zM9 1h7v6H9zM0 9h7v6H0zM9 9h7v6H9z" { ...solid } /></Icon>
                </ViewButton>
                <ViewButton aria-label="リスト表示">
                    <Icon size={ 10 } weight={ 2 }><path d="M0 2h16M0 6h16M0 10h16M0 14h16" /></Icon>
                </ViewButton>
                <LibrarySearch>
                    <Icon size={ 8 } weight={ 2.5 }><circle cx="6" cy="6" r="4.500" /><path d="M9.500 9.500l5 5" /></Icon>
                    <input aria-label="ライブラリを検索" placeholder="Adobe Stock を検索" />
                </LibrarySearch>
                <ViewButton aria-label="検索対象"><Triangle /></ViewButton>
            </LibraryTop>
            <LibraryMessage>
                <StyledSvg width="38" height="30" viewBox="0 0 38 30" $weight={ 3 }>
                    <path d="M23 24H11a8.500 8.500 0 0 1-1-17C14 1 21 0 26 4c3 2.500 3.500 5 3.500 5 4 1 7 4 6 8.500M24 20l-8-8c-3-3-8-2-8 2.500 0 3 2.500 4.500 5 4M19 12c3-4 9-3 10.500 1" />
                    <path d="M26 18l9 9M35 18l-9 9" strokeWidth="3.500" />
                </StyledSvg>
                <p>Creative Cloud Libraries を初期化中にエ<br />ラーが発生しました</p>
            </LibraryMessage>
            <PanelFooter $tall>
                <FooterGroup $close>
                    <IconButton aria-label="Creative Cloud"><Icon size={ 13 }>{ glyphs.creative }</Icon></IconButton>
                    <IconButton $dim aria-label="削除"><Icon size={ 11 }>{ glyphs.trash }</Icon></IconButton>
                </FooterGroup>
            </PanelFooter>
        </Panel>
    );
}

function SwatchFolder( { colors } ) {
    return (
        <SwatchGrid>
            <FolderCell><Icon size={ 10 }>{ glyphs.folder }</Icon></FolderCell>
            { colors.map( ( color ) => <Swatch key={ color } $fill={ color } aria-label={ color } /> ) }
        </SwatchGrid>
    );
}

function SwatchPanel() {
    return (
        <Panel>
            <Tabs tight names={ [ 'スウォッチ', 'カラー', 'カラーガイ', 'Color テー' ] } />
            <PaintRow>
                <PaintStack $small>
                    <StrokeChip $small aria-label="線" />
                    <FillChip $small aria-label="塗り" />
                </PaintStack>
                <ViewToggle>
                    <ViewButton aria-label="リスト表示">
                        <Icon size={ 11 } weight={ 1.8 }><path d="M1 2h14M1 6h14M1 10h14M1 14h14" /></Icon>
                    </ViewButton>
                    <ViewButton $active aria-label="サムネール表示">
                        <Icon size={ 11 }><path d="M0 1h4v4H0zM6 1h4v4H6zM12 1h4v4h-4zM0 6h4v4H0zM6 6h4v4H6zM12 6h4v4h-4zM0 11h4v4H0zM6 11h4v4H6zM12 11h4v4h-4z" { ...solid } /></Icon>
                    </ViewButton>
                </ViewToggle>
            </PaintRow>
            <Scrolled>
                <ScrolledContent>
                    <SwatchGrid>
                        { swatches.map( ( fill, index ) => <Swatch key={ index } $fill={ fill } aria-label={ `スウォッチ ${ index + 1 }` } /> ) }
                    </SwatchGrid>
                    <SwatchFolder colors={ grays } />
                    <SwatchFolder colors={ brights } />
                </ScrolledContent>
                <ScrollRail />
            </Scrolled>
            <Footer names={ [ 'library', 'share', 'cloud', 'kinds', 'options', 'folder', 'page', 'trash' ] } />
        </Panel>
    );
}

function SymbolPanel() {
    return (
        <Panel>
            <Tabs names={ [ 'シンボル', 'ブラシ', 'グラフィックスタイル' ] } />
            <SymbolBody>
                <Scrolled $tall>
                    <ScrolledContent>
                        <SymbolGrid>
                            { symbols.map( ( [ name, drawing ] ) => (
                                <SymbolCell key={ name } aria-label={ name }>
                                    <StyledSvg width="24" height="24" viewBox="0 0 24 24">{ drawing }</StyledSvg>
                                </SymbolCell>
                            ) ) }
                        </SymbolGrid>
                    </ScrolledContent>
                    <ScrollRail />
                </Scrolled>
            </SymbolBody>
            <Footer dim names={ [ 'library', 'place', 'unlink', 'options', 'page', 'trash' ] } />
        </Panel>
    );
}

export default function App() {
    return (
        <ThemeProvider theme={ theme }>
            <GlobalStyle />
            <Window>
                <TopMenu />
                <OptionsBar />
                <Body>
                    <Toolbar />
                    <Document />
                    <IconDock />
                    <Dock $wide>
                        <DockHeader />
                        <LibraryPanel />
                        <SwatchPanel />
                        <SymbolPanel />
                        <Panel $gap={ 4 }><Tabs names={ [ 'アピアランス', 'CSS プロパティ' ] } /></Panel>
                        <Panel $gap={ 4 }><Tabs names={ [ 'レイヤー', 'アートボード' ] } active={ 1 } /></Panel>
                        <Panel><Tabs names={ [ 'パスファインダー' ] } /></Panel>
                    </Dock>
                </Body>
            </Window>
        </ThemeProvider>
    );
}
